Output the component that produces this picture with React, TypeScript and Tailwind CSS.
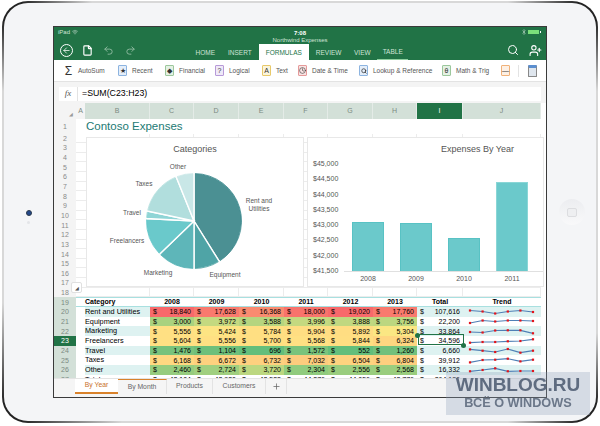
import type { ReactNode } from 'react';
import { ArrowLeft, File, Undo2, Redo2, Search, UserPlus, Wifi, Bluetooth, Plus, Clock } from 'lucide-react';

const ribbon: { label: string; glyph: ReactNode; box: string; w: string }[] = [
  { label: 'AutoSum', glyph: 'Σ', box: 'border-transparent text-[12px]', w: 'w-[54px]' },
  { label: 'Recent', glyph: '★', box: 'border-[#8db4e0] bg-[#e4eefa]', w: 'w-[47px]' },
  { label: 'Financial', glyph: '◆', box: 'border-[#9cc79c] bg-[#e4f1e4]', w: 'w-[50px]' },
  { label: 'Logical', glyph: '?', box: 'border-[#b79ad8] bg-[#f0e9f8]', w: 'w-[47px]' },
  { label: 'Text', glyph: 'A', box: 'border-[#e8c96a] bg-[#fbf5dc]', w: 'w-[36px]' },
  { label: 'Date & Time', glyph: <Clock size={7} />, box: 'border-[#e59a9a] bg-[#f9e3e3]', w: 'w-[61px]' },
  { label: 'Lookup & Reference', glyph: <Search size={6} strokeWidth={3} />, box: 'border-[#8db4e0] bg-[#e4eefa]', w: 'w-[83px]' },
  { label: 'Math & Trig', glyph: 'θ', box: 'border-[#9cc79c] bg-[#e4f1e4]', w: 'w-[59px]' },
];

const columns = [
  { name: 'B', w: 'w-[65px]' },
  { name: 'C', w: 'w-[44px]' },
  { name: 'D', w: 'w-[45px]' },
  { name: 'E', w: 'w-[45px]' },
  { name: 'F', w: 'w-[44px]' },
  { name: 'G', w: 'w-[45px]' },
  { name: 'H', w: 'w-[44px]' },
  { name: 'I', w: 'w-[46px]' },
  { name: 'J', w: 'w-[78px]' },
];

const yearCols = ['2008', '2009', '2010', '2011', '2012', '2013'];
const yearWidths = ['w-[44px]', 'w-[45px]', 'w-[45px]', 'w-[44px]', 'w-[45px]', 'w-[44px]'];

const rows = [
  { n: 20, name: 'Rent and Utilities', tint: true, total: '107,616', vals: [['18,840', 'bg-[#f8696b]'], ['17,628', 'bg-[#f97a6e]'], ['16,368', 'bg-[#f98b70]'], ['18,000', 'bg-[#f8736c]'], ['19,020', 'bg-[#f8696b]'], ['17,760', 'bg-[#f97a6e]']], spark: [3.5, 4.5, 6.5, 4.5, 3.5, 5] },
  { n: 21, name: 'Equipment', tint: false, total: '22,200', vals: [['3,000', 'bg-[#a9d27f]'], ['3,972', 'bg-[#c4d980]'], ['3,588', 'bg-[#b5d57f]'], ['3,996', 'bg-[#c4d980]'], ['3,888', 'bg-[#c0d880]'], ['3,756', 'bg-[#bcd780]']], spark: [6, 3.5, 4.5, 3.5, 3.5, 4] },
  { n: 22, name: 'Marketing', tint: true, total: '33,864', vals: [['5,556', 'bg-[#ffe083]'], ['5,424', 'bg-[#fde483]'], ['5,784', 'bg-[#ffdf82]'], ['5,904', 'bg-[#ffdd82]'], ['5,892', 'bg-[#ffdd82]'], ['5,304', 'bg-[#fbe783]']], spark: [5, 5.5, 3.5, 3.3, 3.3, 6.3] },
  { n: 23, name: 'Freelancers', tint: false, total: '34,596', vals: [['5,604', 'bg-[#ffe083]'], ['5,556', 'bg-[#ffe083]'], ['5,700', 'bg-[#ffdf82]'], ['5,568', 'bg-[#ffe083]'], ['5,844', 'bg-[#ffde82]'], ['6,324', 'bg-[#ffd681]']], spark: [6.7, 6, 6, 5.3, 5, 3.3] },
  { n: 24, name: 'Travel', tint: true, total: '6,660', vals: [['1,476', 'bg-[#77c27c]'], ['1,104', 'bg-[#6dbf7b]'], ['696', 'bg-[#63be7b]'], ['1,572', 'bg-[#79c37c]'], ['552', 'bg-[#63be7b]'], ['1,260', 'bg-[#72c07c]']], spark: [3.4, 4.7, 6, 3, 6.7, 4.7] },
  { n: 25, name: 'Taxes', tint: false, total: '39,912', vals: [['6,168', 'bg-[#ffd881]'], ['6,672', 'bg-[#fed17f]'], ['6,732', 'bg-[#fed07f]'], ['7,032', 'bg-[#fdcc7e]'], ['6,504', 'bg-[#fed37f]'], ['6,804', 'bg-[#fecf7f]']], spark: [6.4, 4, 3.7, 2.7, 5.4, 3.7] },
  { n: 26, name: 'Other', tint: true, total: '16,332', vals: [['2,460', 'bg-[#96cc7e]'], ['2,724', 'bg-[#a0cf7f]'], ['3,720', 'bg-[#bcd780]'], ['2,304', 'bg-[#90cb7e]'], ['2,556', 'bg-[#9acd7e]'], ['2,568', 'bg-[#9acd7e]']], spark: [6.3, 5, 3.3, 6.3, 6, 6] },
];

// cut off by the sheet tabs in the picture, only the top of it shows
const totalRow = ['43,104', '42,980', '42,588', '44,376', '44,056', '43,776'];

// pie slices run clockwise from 12 o'clock, values are degrees
const slices = [
  { deg: 148, color: '#4b9093', edge: '#2f8286' },
  { deg: 32, color: '#4fa4a6', edge: '#3f9a9c' },
  { deg: 46, color: '#5eb6b9', edge: '#4fb0b3' },
  { deg: 47, color: '#6ac9cb', edge: '#5cc4c6' },
  { deg: 9, color: '#8fd5d6', edge: '#8fd5d6' },
  { deg: 56, color: '#b1dedd', edge: '#b1dedd' },
  { deg: 22, color: '#c9e7e7', edge: '#c9e7e7' },
];

function polar(r: number, deg: number) {
  const a = ((deg - 90) * Math.PI) / 180;
  return [50 + r * Math.cos(a), 50 + r * Math.sin(a)];
}

function Pie() {
  let start = 0;
  return (
    <svg width="100" height="100" viewBox="0 0 100 100">
      {slices.map((s) => {
        const from = start;
        start += s.deg;
        const [x1, y1] = polar(48, from);
        const [x2, y2] = polar(48, from + s.deg);
        const [ax, ay] = polar(47.5, from + 1);
        const [bx, by] = polar(47.5, from + s.deg - 1);
        return (
          <g key={from}>
            <path d={`M50 50L${x1} ${y1}A48 48 0 0 1 ${x2} ${y2}Z`} fill={s.color} stroke="#fff" strokeWidth="1.4" />
            <path d={`M${ax} ${ay}A47.5 47.5 0 0 1 ${bx} ${by}`} fill="none" stroke={s.edge} strokeWidth="0.8" />
          </g>
        );
      })}
    </svg>
  );
}

function Spark({ points }: { points: number[] }) {
  const xs = points.map((_, i) => 5 + i * 12.6);
  return (
    <svg width="72" height="9" viewBox="0 0 72 9">
      <polyline points={points.map((p, i) => `${xs[i]},${p}`).join(' ')} fill="none" stroke="#4f7fb5" strokeWidth="1.2" />
      {points.map((p, i) => (
        <rect key={i} x={xs[i] - 1.1} y={p - 1.1} width="2.2" height="2.2" fill="#e3141b" />
      ))}
    </svg>
  );
}

function RowHead({ n, active }: { n: number; active?: boolean }) {
  const tone = active ? 'bg-[#217346] text-white' : n >= 19 ? 'bg-[#d3e0d8] text-[#7b8a82]' : 'bg-[#f4f4f4] text-[#8a8a8a]';
  return <div className={`flex h-full w-[22px] shrink-0 items-center justify-center text-[7px] leading-none ${tone}`}>{n}</div>;
}

function EmptyRow({ n }: { n: number }) {
  return (
    <div className="flex h-[9.65px] shrink-0 items-stretch">
      <RowHead n={n} />
      <div className="w-[9px] border-b border-[#ececec]" />
      {columns.map((c) => (
        <div key={c.name} className={`${c.w} shrink-0 border-r border-b border-[#ececec]`} />
      ))}
    </div>
  );
}

function Money({ value, color, w }: { value: string; color?: string; w: string }) {
  return (
    <div className={`${w} flex shrink-0 items-center justify-between pr-[3px] pl-[3px] text-[7px] leading-none text-black ${color ?? ''}`}>
      <span>$</span>
      <span>{value}</span>
    </div>
  );
}

function ChartLabel({ className, children }: { className: string; children: ReactNode }) {
  return <span className={`absolute -translate-x-1/2 text-center text-[6.5px] leading-[7.5px] whitespace-nowrap text-[#555] ${className}`}>{children}</span>;
}

function RibbonBox({ className, children }: { className: string; children: ReactNode }) {
  return <span className={`flex h-[11px] w-[9px] shrink-0 items-center justify-center rounded-[1px] border text-[7px] leading-none text-[#333] ${className}`}>{children}</span>;
}

export default function App() {
  return (
    <div className="relative h-[426px] w-[600px] overflow-hidden bg-white font-['Liberation_Sans',Arial,sans-serif]">
      <div className="mx-[2px] mt-[1px] h-[422px] w-[596px] rounded-[26px] bg-[#d8d8d8] bg-[radial-gradient(circle_at_0_0,#222_20px,transparent_90px),radial-gradient(circle_at_100%_0,#222_20px,transparent_90px),radial-gradient(circle_at_0_100%,#222_20px,transparent_120px),radial-gradient(circle_at_100%_100%,#222_20px,transparent_90px)] p-[2px]">
        <div className="flex h-full items-start rounded-[24px] bg-[#f4f5f7]">
          <div className="flex w-[49px] shrink-0 flex-col items-center gap-[5px] self-center pt-[9px]">
            <div className="h-[6px] w-[6px] rounded-full border border-[#2b3a4d] bg-[#23488a]" />
            <div className="h-[3px] w-[3px] rounded-full bg-[#e3e5e8]" />
          </div>

          <div className="mt-[23px] flex h-[372px] w-[494px] shrink-0 flex-col overflow-hidden border border-[#3a3a3a] bg-white">
            {/* green title bar */}
            <div className="relative h-[33px] shrink-0 bg-[#217346] text-white">
              <div className="flex h-[10px] items-center justify-between pr-[5px] pl-[4px] text-[6px]">
                <span className="flex items-center gap-[2px] text-[#cfe3d6]">iPad <Wifi size={6} /></span>
                <span className="flex items-center gap-[1px]">
                  <Bluetooth size={6} className="text-[#cfe3d6]" />
                  <span className="h-[4px] w-[11px] bg-[#7be07b]" />
                  <span className="h-[2px] w-px bg-white" />
                </span>
              </div>
              <div className="absolute top-[2px] left-0 w-full text-center text-[6px] font-bold">7:08</div>
              <div className="absolute top-[9px] left-0 w-full text-center text-[6px] text-[#cfe3d6]">Northwind Expenses</div>
              <div className="flex h-[23px] items-center pt-[3px] pl-[5.5px]">
                <span className="flex h-[13px] w-[13px] shrink-0 items-center justify-center rounded-full border border-white"><ArrowLeft size={9} /></span>
                <File size={11} className="ml-[9px] shrink-0" strokeWidth={2.5} />
                <Undo2 size={11} className="ml-[10.5px] shrink-0 text-[#8fbba1]" />
                <Redo2 size={11} className="ml-[11px] shrink-0 text-[#8fbba1]" />
                <div className="ml-[59.5px] flex h-full items-end text-[6.5px] whitespace-nowrap">
                  <span className="pb-[2px] text-[#cfe3d6]">HOME</span>
                  <span className="ml-[13px] pb-[2px] text-[#cfe3d6]">INSERT</span>
                  <span className="ml-[7px] h-[16px] bg-white px-[7px] pt-[4px] text-[#217346]">FORMULAS</span>
                  <span className="ml-[7px] pb-[2px] text-[#cfe3d6]">REVIEW</span>
                  <span className="ml-[12.5px] pb-[2px] text-[#cfe3d6]">VIEW</span>
                  <span className="ml-[6.5px] border-b border-[#8fd09f] px-[5.5px] pb-[2px] text-[#cfe3d6]">TABLE</span>
                </div>
                <Search size={12} className="ml-auto shrink-0" />
                <UserPlus size={13} className="mr-[4.5px] ml-[9.5px] shrink-0" />
              </div>
            </div>

            {/* ribbon */}
            <div className="flex h-[22px] shrink-0 items-center border-b border-[#e3e3e3] bg-white pl-[10px] text-[6.5px] text-[#555]">
              {ribbon.map((r) => (
                <div key={r.label} className={`${r.w} flex shrink-0 items-center gap-[5px]`}>
                  <RibbonBox className={r.box}>{r.glyph}</RibbonBox>
                  <span className="whitespace-nowrap">{r.label}</span>
                </div>
              ))}
              <RibbonBox className="border-[#f0b27a] bg-[#fdf0e4]">—</RibbonBox>
              <span className="ml-[8px] h-[12px] w-px shrink-0 bg-[#e3e3e3]" />
              <span className="ml-[9px] h-[12px] w-[9px] shrink-0 rounded-[1px] border border-[#888] border-t-[3px] border-t-[#5b8fd0] bg-[#dfe6ee]" />
            </div>

            {/* formula bar */}
            <div className="h-[21px] shrink-0 bg-[#f4f4f4] pt-[5px] pr-[5px] pl-[5px]">
              <div className="flex h-[14px] items-center bg-white">
                <span className="w-[19px] border-r border-[#e3e3e3] text-center font-['Liberation_Serif',serif] text-[9px] text-[#555] italic">fx</span>
                <span className="pl-[4px] text-[8.8px] text-black">=SUM(C23:H23)</span>
              </div>
            </div>

            {/* sheet */}
            <div className="relative flex min-h-0 flex-1 flex-col overflow-hidden bg-white">
              <div className="flex h-[16px] shrink-0 items-stretch text-[7px] text-[#7b8a82]">
                <div className="flex w-[22px] items-end justify-end bg-[#f4f4f4] pr-[3px] pb-[2px] text-[5px] leading-none text-[#999]">◢</div>
                <div className="flex w-[9px] items-center justify-center bg-[#f4f4f4]">A</div>
                {columns.map((c) => (
                  <div key={c.name} className={`${c.w} flex shrink-0 items-center justify-center border-r border-[#e4ebe7] ${c.name === 'I' ? 'bg-[#217346] text-white' : 'bg-[#d3e0d8]'}`}>{c.name}</div>
                ))}
              </div>

              <div className="flex h-[14.5px] shrink-0 items-stretch">
                <RowHead n={1} />
                <div className="w-[9px]" />
                <span className="pl-[1px] text-[11.5px] leading-[14px] text-[#1c7a74]">Contoso Expenses</span>
              </div>
              {Array.from({ length: 17 }, (_, i) => (
                <EmptyRow key={i} n={i + 2} />
              ))}

              {/* table */}
              <div className="flex h-[9.65px] shrink-0 items-stretch">
                <RowHead n={19} />
                <div className="flex border-y border-[#a8e0e0] pl-[9px] text-[7px] leading-[7.5px] font-bold text-black">
                  <div className="w-[65px] shrink-0">Category</div>
                  {yearCols.map((y, i) => (
                    <div key={y} className={`${yearWidths[i]} shrink-0 text-center`}>{y}</div>
                  ))}
                  <div className="w-[46px] shrink-0 text-center">Total</div>
                  <div className="w-[78px] shrink-0 text-center">Trend</div>
                </div>
              </div>
              {rows.map((r) => (
                <div key={r.n} className="flex h-[9.65px] shrink-0 items-stretch">
                  <RowHead n={r.n} active={r.n === 23} />
                  <div className="w-[9px]" />
                  <div className={`flex w-[65px] shrink-0 items-center text-[7.3px] leading-none whitespace-nowrap text-black ${r.tint ? 'bg-[#def2f1]' : ''}`}>{r.name}</div>
                  {r.vals.map(([v, c], i) => (
                    <Money key={i} value={v} color={c} w={yearWidths[i]} />
                  ))}
                  <Money value={r.total} w="w-[46px]" color={r.tint ? 'bg-[#def2f1]' : ''} />
                  <div className={`flex w-[78px] shrink-0 items-center pl-[2px] ${r.tint ? 'bg-[#def2f1]' : ''}`}><Spark points={r.spark} /></div>
                </div>
              ))}
              <div className="flex h-[9.65px] shrink-0 items-stretch">
                <RowHead n={27} />
                <div className="flex pl-[9px]">
                  <div className="w-[65px] shrink-0 text-[7.3px] leading-[9px] text-black">Total</div>
                  {totalRow.map((v, i) => (
                    <Money key={i} value={v} w={yearWidths[i]} />
                  ))}
                  <Money value="264,180" w="w-[46px]" />
                </div>
              </div>

              {/* selection handles over the active cell */}
              <div className="absolute top-[231px] left-[364px] h-[11px] w-[46px] border border-[#217346]" />
              <div className="absolute top-[229.5px] left-[361px] h-[5px] w-[5px] rounded-full bg-[#217346]" />
              <div className="absolute top-[240px] left-[406.5px] h-[5px] w-[5px] rounded-full bg-[#217346]" />

              {/* left chart */}
              <div className="absolute top-[34px] left-[32px] h-[150px] w-[218px] border border-[#e8e8e8] bg-white">
                <div className="absolute top-[5px] left-0 w-full text-center text-[9px] text-[#555]">Categories</div>
                <div className="absolute top-[33px] left-[57px]"><Pie /></div>
                <ChartLabel className="top-[25px] left-[91px]">Other</ChartLabel>
                <ChartLabel className="top-[42px] left-[57px]">Taxes</ChartLabel>
                <ChartLabel className="top-[71px] left-[45px]">Travel</ChartLabel>
                <ChartLabel className="top-[99px] left-[40px]">Freelancers</ChartLabel>
                <ChartLabel className="top-[131px] left-[71px]">Marketing</ChartLabel>
                <ChartLabel className="top-[133px] left-[138px]">Equipment</ChartLabel>
                <ChartLabel className="top-[59px] left-[172px]">Rent and<br />Utilities</ChartLabel>
              </div>
              <div className="absolute top-[179px] left-[17px] flex h-[11px] w-[11px] items-end justify-end rounded-[2px] border border-[#e0e0e0] bg-white pr-[2px] pb-[1px] text-[5px] leading-none text-[#555]">◢</div>

              {/* right chart */}
              <div className="absolute top-[34px] left-[253px] h-[150px] w-[237px] border border-[#e8e8e8] bg-white">
                <div className="absolute top-[5px] left-[133px] text-[9px] whitespace-nowrap text-[#555]">Expenses By Year</div>
                <div className="absolute top-[22px] left-[5px] flex h-[115px] flex-col justify-between text-[7px] leading-[8px] text-[#555]">
                  {['$45,000', '$44,500', '$44,000', '$43,500', '$43,000', '$42,500', '$42,000', '$41,500'].map((t) => (
                    <span key={t}>{t}</span>
                  ))}
                </div>
                <div className="absolute top-[24px] left-[36px] flex h-[110px] w-[199px] items-end gap-[16px] border-b border-[#e0e0e0] pl-[8px]">
                  <div className="h-[49px] w-[32px] border border-b-0 border-[#58c2c4] bg-[#6bc9cb]" />
                  <div className="h-[48px] w-[32px] border border-b-0 border-[#58c2c4] bg-[#6bc9cb]" />
                  <div className="h-[33px] w-[32px] border border-b-0 border-[#58c2c4] bg-[#6bc9cb]" />
                  <div className="h-[89px] w-[32px] border border-b-0 border-[#8ad6d6] bg-[#6bc9cb]" />
                </div>
                <div className="absolute top-[137px] left-[44px] flex gap-[16px] text-center text-[7px] leading-[8px] text-[#555]">
                  {['2008', '2009', '2010', '2011'].map((y) => (
                    <span key={y} className="w-[32px]">{y}</span>
                  ))}
                </div>
              </div>
            </div>

            {/* sheet tabs */}
            <div className="flex h-[19px] shrink-0 items-start border-t border-[#e3e3e3] bg-[#f5f5f5] pl-[21px] text-[6.8px] text-[#666]">
              <span className="flex h-[15px] w-[43px] items-center justify-center border-b-2 border-[#d9822b] bg-white text-[#c8702a]">By Year</span>
              <span className="flex h-[15px] w-[49px] items-center justify-center border-t border-r border-t-[#d9822b] border-r-[#e3e3e3]">By Month</span>
              <span className="flex h-[15px] w-[46px] items-center justify-center border-r border-[#e3e3e3]">Products</span>
              <span className="flex h-[15px] w-[53px] items-center justify-center border-r border-[#e3e3e3]">Customers</span>
              <span className="flex h-[15px] w-[21px] items-center justify-center border-r border-[#e3e3e3]"><Plus size={9} /></span>
            </div>
          </div>

          <div className="flex flex-1 justify-center self-center">
            <div className="flex h-[26px] w-[26px] items-center justify-center rounded-full bg-[linear-gradient(180deg,#ecedf0,#f9f9fa)]">
              <div className="h-[9px] w-[10px] rounded-[2px] border border-[#dcdde0] bg-[#eeeff1]" />
            </div>
          </div>
        </div>
      </div>

      {/* watermark */}
      <div className="absolute top-[372px] left-[446px] flex h-[43px] w-[144px] flex-col items-center bg-[#8fa0b8]/30 pt-[2px]">
        <span className="text-[19px] leading-[22px] font-bold text-[#5f6c80] blur-[0.5px]">WINBLOG.RU</span>
        <span className="text-[12.7px] leading-[14px] font-bold text-[#6b7789] blur-[0.5px]">ВСЁ О WINDOWS</span>
      </div>
    </div>
  );
}
